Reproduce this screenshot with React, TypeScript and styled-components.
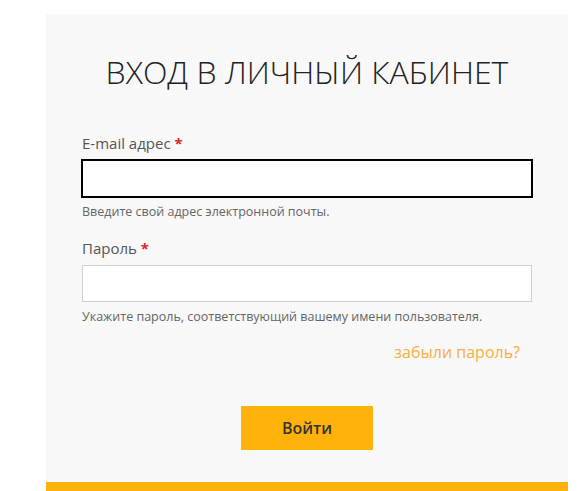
import React from 'react';
import styled, { createGlobalStyle } from 'styled-components';

const GlobalStyle = createGlobalStyle`
  html, body {
    margin: 0;
    padding: 0;
    background: #ffffff;
  }
  body {
    font-family: 'Open Sans', 'Liberation Sans', sans-serif;
  }
`;

const Page = styled.div`
  padding: 14px 18px 0 46px;
  height: 491px;
  box-sizing: border-box;
  overflow: hidden;
`;

const Panel = styled.div`
  width: 522px;
  background: #f8f8f8;
  display: flex;
  flex-direction: column;
`;

const Form = styled.form`
  display: flex;
  flex-direction: column;
  padding: 0 36px;
`;

const Title = styled.h1`
  margin: 40px 0 0;
  font-weight: 300;
  font-size: 32px;
  line-height: 36px;
  color: #222;
  text-align: center;
`;

const Field = styled.div<{ $top: number }>`
  display: flex;
  flex-direction: column;
  margin-top: ${({ $top }) => $top}px;
`;

const Label = styled.label`
  font-size: 15px;
  line-height: 20px;
  color: #555;
  margin-bottom: 7px;

  span {
    color: #e2231a;
    font-weight: 700;
  }
`;

const Input = styled.input<{ $focused?: boolean }>`
  box-sizing: border-box;
  width: 100%;
  height: 37px;
  margin: 0;
  border: 1px solid ${({ $focused }) => ($focused ? '#000' : '#cfcfcf')};
  outline: ${({ $focused }) => ($focused ? '0.5px solid #000' : 'none')};
  background: #fff;
  font-family: inherit;
  font-size: 14px;
  padding: 0 10px;
`;

const Hint = styled.div`
  font-size: 12.5px;
  line-height: 16px;
  color: #666;
  margin-top: 7px;
`;

const ForgotRow = styled.div`
  display: flex;
  justify-content: flex-end;
  padding-right: 12px;
  margin-top: 17px;
`;

const ForgotLink = styled.a`
  font-size: 16px;
  line-height: 20px;
  color: #f7ae47;
  text-decoration: none;
  cursor: pointer;
`;

const ButtonRow = styled.div`
  display: flex;
  justify-content: center;
  margin-top: 44px;
  margin-bottom: 32px;
`;

const SubmitButton = styled.button`
  width: 132px;
  height: 44px;
  border: none;
  background: #ffb20a;
  color: #333;
  font-family: inherit;
  font-weight: 600;
  font-size: 16px;
  cursor: pointer;
`;

const BottomBar = styled.div`
  height: 10px;
  background: #ffb20a;
`;

export default function App() {
  return (
    <>
      <GlobalStyle />
      <Page>
        <Panel>
          <Form onSubmit={(e) => e.preventDefault()}>
            <Title>ВХОД В ЛИЧНЫЙ КАБИНЕТ</Title>
            <Field $top={43}>
              <Label>
                E-mail адрес <span>*</span>
              </Label>
              <Input type="email" $focused />
              <Hint>Введите свой адрес электронной почты.</Hint>
            </Field>
            <Field $top={18}>
              <Label>
                Пароль <span>*</span>
              </Label>
              <Input type="password" />
              <Hint>Укажите пароль, соответствующий вашему имени пользователя.</Hint>
            </Field>
            <ForgotRow>
              <ForgotLink>забыли пароль?</ForgotLink>
            </ForgotRow>
            <ButtonRow>
              <SubmitButton type="submit">Войти</SubmitButton>
            </ButtonRow>
          </Form>
          <BottomBar />
        </Panel>
      </Page>
    </>
  );
}
